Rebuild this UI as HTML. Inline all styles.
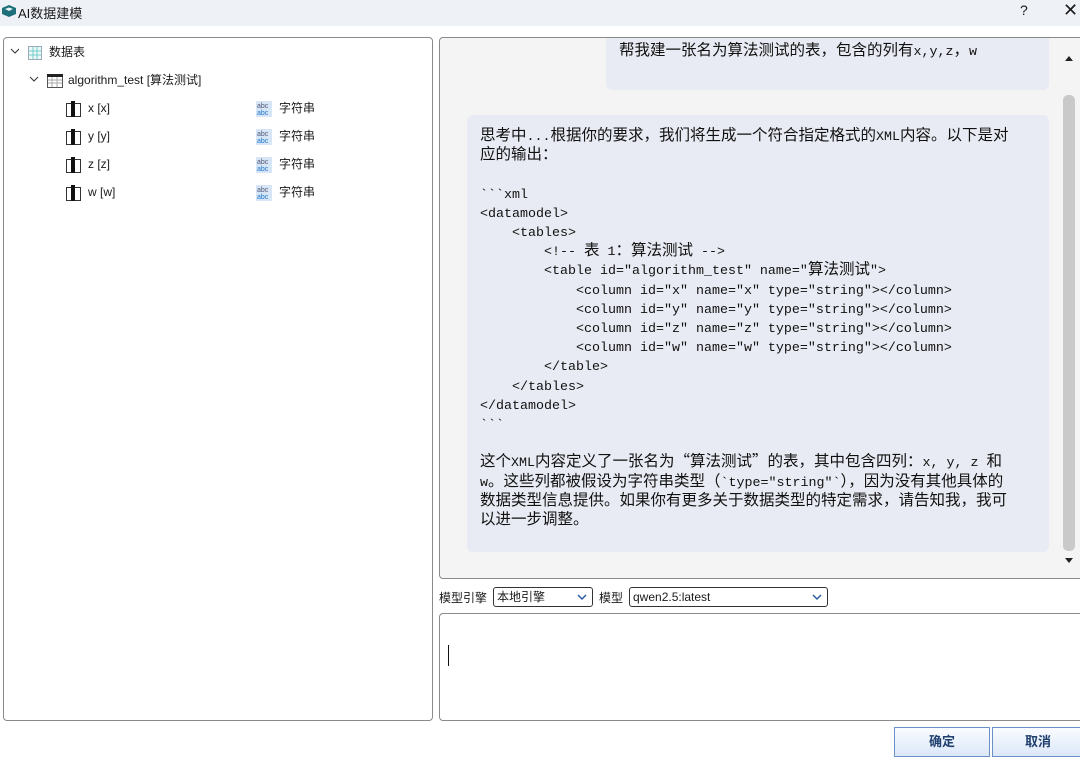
<!DOCTYPE html>
<html><head><meta charset="utf-8">
<style>
*{box-sizing:border-box;margin:0;padding:0}
body{width:1080px;height:760px;overflow:hidden;background:#fff;font-family:"Liberation Sans","Noto Sans CJK SC",sans-serif;font-size:12px;color:#1a1a1a;position:relative}
.abs{position:absolute}
#title{left:0;top:0;width:1080px;height:26px;background:#eef1f6}
#left{left:3px;top:37px;width:430px;height:684px;border:1px solid #8a8a8a;border-radius:4px;background:#fff}
.row{position:absolute;height:20px;line-height:20px;font-size:12px}
#chat{left:439px;top:37px;width:645px;height:542px;border:1px solid #8a8a8a;border-radius:4px;background:#f4f4f4;overflow:hidden}
.bub{position:absolute;background:#e8ebf3;border-radius:6px}
.txt{font-family:"Liberation Mono","Noto Sans CJK SC",monospace;font-size:13.33px;line-height:19.2px;white-space:pre;color:#111}
.c{font-family:"Noto Sans CJK SC",sans-serif;font-size:15.5px;line-height:0}
.combo{position:absolute;height:20px;border:1px solid #333;border-radius:3px;background:#fff;font-size:12px;line-height:18px;padding-left:3px}
.combo svg{position:absolute;right:5px;top:6px}
.btn{position:absolute;top:727px;height:30px;border:1px solid #6b8fc7;background:linear-gradient(#fafcff,#dbe7f8);text-align:center;line-height:28px;font-size:13px;font-weight:bold;color:#1f3f6f}
</style></head><body>
<div id="title" class="abs">
  <svg class="abs" style="left:1px;top:4px" width="16" height="14" viewBox="0 0 16 14"><path d="M1 4 L8 1 L15 4 L15 10 L8 13 L1 10Z" fill="#1d6f7a"/><path d="M4 5 L8 3.5 L12 5 L8 7Z" fill="#e6f4f5"/></svg>
  <div class="abs" style="left:18px;top:3px;font-size:13px">AI数据建模</div>
  <div class="abs" style="left:1020px;top:2px;font-size:14px">?</div>
  <div class="abs" style="left:1063px;top:0px;font-size:18px">✕</div>
</div>
<div id="left" class="abs">
  <div class="row" style="left:6px;top:4px"><svg width="10" height="10"><path d="M1 3 L5 7 L9 3" stroke="#333" fill="none"/></svg></div>
  <div class="row" style="left:24px;top:4px"><svg width="14" height="14" style="vertical-align:middle"><rect x=".5" y=".5" width="13" height="13" fill="#eafaf6" stroke="#9ab"/><path d="M5 1V13M9 1V13M1 5H13M1 9H13" stroke="#7cc"/></svg></div>
  <div class="row" style="left:45px;top:4px">数据表</div>
  <div class="row" style="left:25px;top:32px"><svg width="10" height="10"><path d="M1 3 L5 7 L9 3" stroke="#333" fill="none"/></svg></div>
  <div class="row" style="left:43px;top:32px"><svg width="16" height="14" style="vertical-align:middle"><rect x=".5" y=".5" width="15" height="13" fill="#fff" stroke="#555"/><rect x="0" y="0" width="16" height="3" fill="#222"/><path d="M1 6H15M1 9H15M5 3V13M10 3V13" stroke="#aaa"/></svg></div>
  <div class="row" style="left:64px;top:32px">algorithm_test [算法测试]</div>
  <div class="row" style="left:62px;top:60px"><svg width="16" height="16" style="vertical-align:middle"><rect x=".5" y="2.5" width="14" height="13" fill="#fff" stroke="#333"/><rect x="5" y="0" width="4" height="16" fill="#111"/></svg></div>
  <div class="row" style="left:84px;top:60px">x [x]</div>
  <div class="row" style="left:62px;top:88px"><svg width="16" height="16" style="vertical-align:middle"><rect x=".5" y="2.5" width="14" height="13" fill="#fff" stroke="#333"/><rect x="5" y="0" width="4" height="16" fill="#111"/></svg></div>
  <div class="row" style="left:84px;top:88px">y [y]</div>
  <div class="row" style="left:62px;top:116px"><svg width="16" height="16" style="vertical-align:middle"><rect x=".5" y="2.5" width="14" height="13" fill="#fff" stroke="#333"/><rect x="5" y="0" width="4" height="16" fill="#111"/></svg></div>
  <div class="row" style="left:84px;top:116px">z [z]</div>
  <div class="row" style="left:62px;top:144px"><svg width="16" height="16" style="vertical-align:middle"><rect x=".5" y="2.5" width="14" height="13" fill="#fff" stroke="#333"/><rect x="5" y="0" width="4" height="16" fill="#111"/></svg></div>
  <div class="row" style="left:84px;top:144px">w [w]</div>
  <div class="row" style="left:252px;top:60px"><svg width="16" height="16" style="vertical-align:middle"><rect width="16" height="16" fill="#d6e6f7"/><text x="1" y="7" font-size="7" fill="#557">abc</text><text x="1" y="14" font-size="7" fill="#27c">abc</text></svg></div>
  <div class="row" style="left:275px;top:60px">字符串</div>
  <div class="row" style="left:252px;top:88px"><svg width="16" height="16" style="vertical-align:middle"><rect width="16" height="16" fill="#d6e6f7"/><text x="1" y="7" font-size="7" fill="#557">abc</text><text x="1" y="14" font-size="7" fill="#27c">abc</text></svg></div>
  <div class="row" style="left:275px;top:88px">字符串</div>
  <div class="row" style="left:252px;top:116px"><svg width="16" height="16" style="vertical-align:middle"><rect width="16" height="16" fill="#d6e6f7"/><text x="1" y="7" font-size="7" fill="#557">abc</text><text x="1" y="14" font-size="7" fill="#27c">abc</text></svg></div>
  <div class="row" style="left:275px;top:116px">字符串</div>
  <div class="row" style="left:252px;top:144px"><svg width="16" height="16" style="vertical-align:middle"><rect width="16" height="16" fill="#d6e6f7"/><text x="1" y="7" font-size="7" fill="#557">abc</text><text x="1" y="14" font-size="7" fill="#27c">abc</text></svg></div>
  <div class="row" style="left:275px;top:144px">字符串</div>
</div>
<div id="chat" class="abs">
  <div class="bub" style="left:166px;top:-8px;width:443px;height:60px"></div>
  <div class="txt abs" style="left:179px;top:5px"><span class="c">帮我建一张名为算法测试的表，包含的列有</span>x,y,z<span class="c">，</span>w</div>
  <div class="bub" style="left:27px;top:77px;width:582px;height:437px"></div>
  <div class="txt abs" style="left:40px;top:90px"><span class="c">思考中</span>...<span class="c">根据你的要求，我们将生成一个符合指定格式的</span>XML<span class="c">内容。以下是对</span>
<span class="c">应的输出：</span>

&#96;&#96;&#96;xml
&lt;datamodel&gt;
    &lt;tables&gt;
        &lt;!-- <span class="c">表</span> 1<span class="c">：算法测试</span> --&gt;
        &lt;table id="algorithm_test" name="<span class="c">算法测试</span>"&gt;
            &lt;column id="x" name="x" type="string"&gt;&lt;/column&gt;
            &lt;column id="y" name="y" type="string"&gt;&lt;/column&gt;
            &lt;column id="z" name="z" type="string"&gt;&lt;/column&gt;
            &lt;column id="w" name="w" type="string"&gt;&lt;/column&gt;
        &lt;/table&gt;
    &lt;/tables&gt;
&lt;/datamodel&gt;
&#96;&#96;&#96;

<span class="c">这个</span>XML<span class="c">内容定义了一张名为“算法测试”的表，其中包含四列：</span>x, y, z <span class="c">和</span>
w<span class="c">。这些列都被假设为字符串类型（</span>&#96;type="string"&#96;<span class="c">），因为没有其他具体的</span>
<span class="c">数据类型信息提供。如果你有更多关于数据类型的特定需求，请告知我，我可</span>
<span class="c">以进一步调整。</span></div>
  <div class="abs" style="left:622px;top:0;width:15px;height:540px;background:#f4f4f4"></div>
  <svg class="abs" style="left:624px;top:16px" width="10" height="8"><path d="M1 7L5 2L9 7Z" fill="#222"/></svg>
  <div class="abs" style="left:623px;top:57px;width:12px;height:456px;background:#c9c9c9;border-radius:5px"></div>
  <svg class="abs" style="left:624px;top:519px" width="10" height="8"><path d="M1 1L5 6L9 1Z" fill="#222"/></svg>
</div>
<div class="abs" style="left:439px;top:589px;font-size:12px">模型引擎</div>
<div class="combo" style="left:493px;top:587px;width:100px">本地引擎<svg width="10" height="7"><path d="M1 1L5 5L9 1" stroke="#2a5ca8" stroke-width="1.5" fill="none"/></svg></div>
<div class="abs" style="left:599px;top:589px;font-size:12px">模型</div>
<div class="combo" style="left:629px;top:587px;width:199px">qwen2.5:latest<svg width="10" height="7"><path d="M1 1L5 5L9 1" stroke="#2a5ca8" stroke-width="1.5" fill="none"/></svg></div>
<div class="abs" style="left:439px;top:613px;width:645px;height:108px;border:1px solid #8a8a8a;border-radius:4px;background:#fff"></div>
<div class="abs" style="left:448px;top:645px;width:1px;height:21px;background:#111"></div>
<div class="btn" style="left:894px;width:96px">确定</div>
<div class="btn" style="left:992px;width:92px">取消</div>
</body></html>
